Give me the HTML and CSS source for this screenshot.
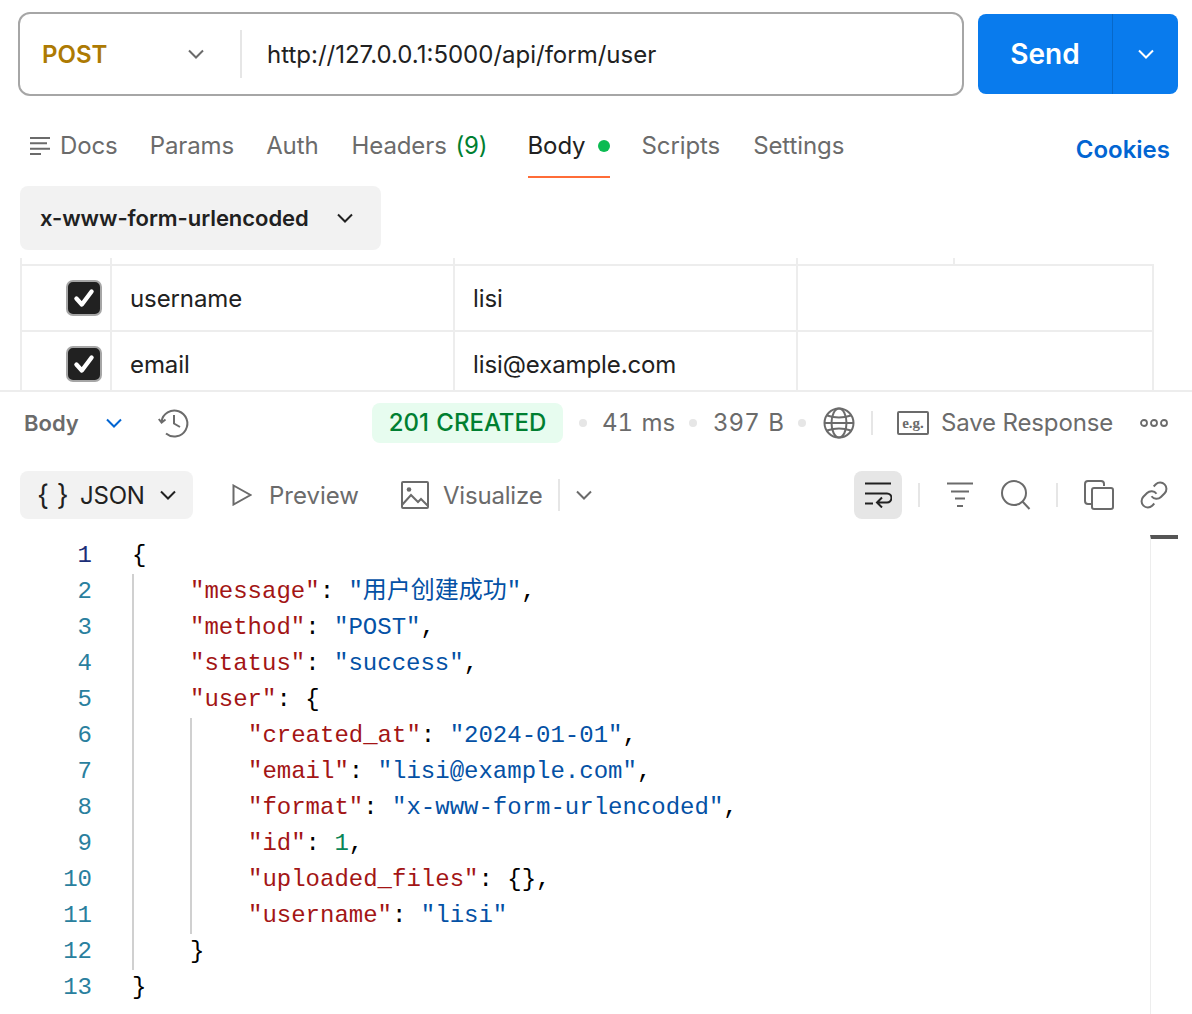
FILE: index.html
```html
<!DOCTYPE html>
<html lang="en">
<head>
    <meta charset="UTF-8">
    <meta name="viewport" content="width=device-width, initial-scale=1.0">
    <title>POST form user</title>
    <link rel="stylesheet" href="styles.css">
</head>
<body>
    <div class="page">
        <!-- Request -->
        <section class="request">
            <div class="url-row">
                <div class="url-box">
                    <div class="method">
                        <span class="method-name">POST</span>
                        <svg class="icon-chevron" viewBox="0 0 16 16"><path d="M1 4.500 8 11.500 15 4.500"/></svg>
                    </div>
                    <span class="url-text">http://127.0.0.1:5000/api/form/user</span>
                </div>
                <div class="send">
                    <span class="send-label">Send</span>
                    <span class="send-more"><svg class="icon-chevron" viewBox="0 0 16 16"><path d="M1 4.500 8 11.500 15 4.500"/></svg></span>
                </div>
            </div>

            <nav class="tabs">
                <svg class="icon-docs" viewBox="0 0 20 20"><path d="M0 1h20M0 6.300h17M0 11.700h20M0 17h11"/></svg>
                <a class="tab tab-tight">Docs</a>
                <a class="tab tab-tight">Params</a>
                <a class="tab">Auth</a>
                <a class="tab tab-headers">Headers <span class="tab-count">(9)</span></a>
                <a class="tab tab-active">Body<i class="tab-dot"></i></a>
                <a class="tab">Scripts</a>
                <a class="tab">Settings</a>
                <a class="cookies">Cookies</a>
            </nav>

            <div class="body-type">
                <span>x-www-form-urlencoded</span>
                <svg class="icon-chevron" viewBox="0 0 16 16"><path d="M1 4.500 8 11.500 15 4.500"/></svg>
            </div>

            <div class="params">
                <div class="params-head">
                    <span></span><span></span><span></span><span></span><span></span>
                </div>
                <div class="params-row">
                    <div class="cell cell-check"><span class="check"><svg viewBox="0 0 24 24"><path d="M5 12.500 10 18 19 6"/></svg></span></div>
                    <div class="cell">username</div>
                    <div class="cell">lisi</div>
                    <div class="cell"></div>
                </div>
                <div class="params-row">
                    <div class="cell cell-check"><span class="check"><svg viewBox="0 0 24 24"><path d="M5 12.500 10 18 19 6"/></svg></span></div>
                    <div class="cell">email</div>
                    <div class="cell">lisi@example.com</div>
                    <div class="cell"></div>
                </div>
            </div>
        </section>

        <!-- Response -->
        <section class="response">
            <div class="status-bar">
                <span class="res-body">Body</span>
                <svg class="icon-chevron icon-blue" viewBox="0 0 16 16"><path d="M1 4.500 8 11.500 15 4.500"/></svg>
                <svg class="icon-history" viewBox="0 0 32 32"><path d="M3.500 14.500A13 13 0 1 1 8 26.500M.8 12 3.600 15.500 7.500 12.500M16 8v8.500l6 3.500"/></svg>
                <span class="status-badge">201 CREATED</span>
                <i class="dot dot-first"></i>
                <span class="metric metric-time">41 ms</span>
                <i class="dot"></i>
                <span class="metric metric-size">397 B</span>
                <i class="dot"></i>
                <svg class="icon-globe" viewBox="0 0 32 32"><circle cx="16" cy="16" r="14.500"/><ellipse cx="16" cy="16" rx="7.500" ry="14.500"/><path d="M4 8.500q12 4 24 0M4 23.500q12-4 24 0M1.500 16h29"/></svg>
                <i class="bar"></i>
                <span class="eg-icon">e.g.</span>
                <span class="save">Save Response</span>
                <svg class="icon-more" viewBox="0 0 28 10"><circle cx="4" cy="5" r="3"/><circle cx="14" cy="5" r="3"/><circle cx="24" cy="5" r="3"/></svg>
            </div>

            <div class="view-bar">
                <div class="format">
                    <span class="format-braces">{ }</span>
                    <span class="format-name">JSON</span>
                    <svg class="icon-chevron" viewBox="0 0 16 16"><path d="M1 4.500 8 11.500 15 4.500"/></svg>
                </div>
                <svg class="icon-play" viewBox="0 0 20 22"><path d="M1.500 1.500 18.500 11 1.500 20.500Z"/></svg>
                <span class="view-link view-preview">Preview</span>
                <svg class="icon-image" viewBox="0 0 28 28"><rect x="1" y="1" width="26" height="26" rx="1"/><circle cx="8" cy="8.500" r="2.300" class="fill"/><path d="M1 24 10 14l7 7 3-3 7 7"/></svg>
                <span class="view-link view-visualize">Visualize</span>
                <i class="bar bar-view"></i>
                <svg class="icon-chevron icon-grey" viewBox="0 0 16 16"><path d="M1 4.500 8 11.500 15 4.500"/></svg>

                <div class="view-tools">
                    <span class="wrap-btn">
                        <svg viewBox="0 0 28 26"><path d="M1 1.500h26M1 11.500h22a4.500 4.500 0 0 1 0 9H14M18 15.500l-5 5 5 5M1 21.500h8"/></svg>
                    </span>
                    <i class="bar"></i>
                    <svg class="icon-filter" viewBox="0 0 28 26"><path d="M1 1.500h26M5 9.500h18M9 16.500h10M11 24h6"/></svg>
                    <svg class="icon-search" viewBox="0 0 30 30"><circle cx="13" cy="13" r="12"/><path d="M21.500 21.500 28.500 29"/></svg>
                    <i class="bar bar-search"></i>
                    <svg class="icon-copy" viewBox="0 0 30 30"><path d="M7 24H4a3 3 0 0 1-3-3V4a3 3 0 0 1 3-3h13a3 3 0 0 1 3 3v2"/><rect x="8" y="8" width="21" height="21" rx="2"/></svg>
                    <svg class="icon-link" viewBox="0 0 24 24"><path d="M10 13a5 5 0 0 0 7.540.540l3-3a5 5 0 0 0-7.070-7.070l-1.720 1.710"/><path d="M14 11a5 5 0 0 0-7.540-.540l-3 3a5 5 0 0 0 7.070 7.070l1.710-1.710"/></svg>
                </div>
            </div>

            <div class="editor">
                <ol class="gutter">
                    <li class="gutter-active">1</li><li>2</li><li>3</li><li>4</li><li>5</li><li>6</li><li>7</li><li>8</li><li>9</li><li>10</li><li>11</li><li>12</li><li>13</li>
                </ol>
                <div class="code">
                    <div class="line">{</div>
                    <div class="fold">
                        <div class="line"><span class="key">"message"</span>: <span class="str">"用户创建成功"</span>,</div>
                        <div class="line"><span class="key">"method"</span>: <span class="str">"POST"</span>,</div>
                        <div class="line"><span class="key">"status"</span>: <span class="str">"success"</span>,</div>
                        <div class="line"><span class="key">"user"</span>: {</div>
                        <div class="fold">
                            <div class="line"><span class="key">"created_at"</span>: <span class="str">"2024-01-01"</span>,</div>
                            <div class="line"><span class="key">"email"</span>: <span class="str">"lisi@example.com"</span>,</div>
                            <div class="line"><span class="key">"format"</span>: <span class="str">"x-www-form-urlencoded"</span>,</div>
                            <div class="line"><span class="key">"id"</span>: <span class="num">1</span>,</div>
                            <div class="line"><span class="key">"uploaded_files"</span>: {},</div>
                            <div class="line"><span class="key">"username"</span>: <span class="str">"lisi"</span></div>
                        </div>
                        <div class="line">}</div>
                    </div>
                    <div class="line">}</div>
                </div>
                <div class="minimap"></div>
            </div>
        </section>
    </div>
</body>
</html>
```
FILE: styles.css
```css
* {
    margin: 0;
    padding: 0;
    box-sizing: border-box;
}

body {
    background-color: #fff;
    font-family: Inter, "Noto Sans", sans-serif;
    color: #212121;
}

svg {
    display: block;
    fill: none;
    stroke: #6b6b6b;
    stroke-width: 2;
    flex-shrink: 0;
}

i {
    display: block;
}

.page {
    width: 1192px;
    height: 1014px;
    overflow: hidden;
}

.icon-chevron {
    width: 16px;
    height: 16px;
}

/* Request */
.request {
    height: 390px;
    overflow: hidden;
    padding-top: 12px;
}

.url-row {
    display: flex;
    align-items: center;
    padding: 0 14px 0 18px;
}

.url-box {
    display: flex;
    align-items: center;
    width: 946px;
    height: 84px;
    border: 2px solid #a6a6a6;
    border-radius: 12px;
}

.method {
    display: flex;
    align-items: center;
    justify-content: space-between;
    width: 222px;
    height: 48px;
    padding: 0 36px 0 22px;
    border-right: 2px solid #e6e6e6;
}

.method-name {
    font-size: 24px;
    font-weight: 600;
    color: #ad7a03;
}

.url-text {
    margin-left: 25px;
    font-size: 24px;
    color: #212121;
}

.send {
    display: flex;
    align-items: center;
    width: 200px;
    height: 80px;
    margin-left: 14px;
    border-radius: 8px;
    background-color: #097bed;
    color: #fff;
}

.send-label {
    width: 135px;
    height: 100%;
    display: flex;
    align-items: center;
    justify-content: center;
    font-size: 28px;
    font-weight: 600;
    border-right: 1px solid #0768c9;
}

.send-more {
    flex: 1;
    display: flex;
    justify-content: center;
}

.send-more svg {
    stroke: #fff;
}

.tabs {
    display: flex;
    align-items: flex-start;
    height: 90px;
    padding: 36px 22px 0 30px;
}

.tab {
    font-size: 24px;
    line-height: 28px;
    letter-spacing: -0.1px;
    color: #6b6b6b;
    margin-right: 33px;
    display: flex;
    align-items: center;
    white-space: pre;
}

.tab-tight {
    margin-right: 32px;
}

.icon-docs {
    width: 20px;
    height: 20px;
    margin: 5px 10px 0 0;
}

.tab-headers {
    word-spacing: 2px;
    margin-right: 40px;
}

.tab-count {
    color: #007f31;
}

.tab-active {
    color: #212121;
    height: 46px;
    align-items: flex-start;
    border-bottom: 2px solid #ff6c37;
    margin-right: 32px;
}

.tab-dot {
    width: 12px;
    height: 12px;
    margin: 8px 0 0 12px;
    border-radius: 50%;
    background-color: #0cbb52;
}

.cookies {
    margin-left: auto;
    margin-top: 4px;
    font-size: 24px;
    line-height: 28px;
    font-weight: 600;
    color: #0265d2;
}

.body-type {
    display: flex;
    align-items: center;
    justify-content: space-between;
    width: 361px;
    height: 64px;
    margin-left: 20px;
    padding: 0 28px 0 20px;
    border-radius: 8px;
    background-color: #f2f2f2;
    font-size: 22px;
    font-weight: 600;
    letter-spacing: -0.05px;
}

.body-type svg {
    stroke: #212121;
}

.params {
    margin: 8px 0 0 20px;
    width: 1134px;
}

.params-head {
    display: grid;
    grid-template-columns: 90px 343px 343px 157px 201px;
    height: 6px;
}

.params-head span {
    border-left: 2px solid #ededed;
}

.params-row {
    display: grid;
    grid-template-columns: 90px 343px 343px 356px;
    height: 66px;
    border-top: 2px solid #ededed;
    border-right: 2px solid #ededed;
}

.cell {
    display: flex;
    align-items: center;
    padding-left: 18px;
    border-left: 2px solid #ededed;
    font-size: 24px;
    letter-spacing: -0.1px;
}

.cell-check {
    padding-left: 44px;
}

.check {
    display: flex;
    align-items: center;
    justify-content: center;
    width: 36px;
    height: 36px;
    border: 2px solid #a6a6a6;
    border-radius: 7px;
    background-color: #212121;
}

.check svg {
    width: 26px;
    height: 26px;
    stroke: #fff;
    stroke-width: 4;
    stroke-linecap: round;
    stroke-linejoin: round;
}

/* Response */
.response {
    height: 624px;
    border-top: 2px solid #ededed;
}

.status-bar {
    display: flex;
    align-items: center;
    height: 62px;
    padding-left: 24px;
    font-size: 24px;
    color: #6b6b6b;
}

.res-body {
    font-size: 22px;
    font-weight: 600;
    width: 82px;
}

.icon-blue {
    stroke: #0265d2;
}

.icon-history {
    width: 32px;
    height: 32px;
    margin: 0 182px 0 36px;
}

.status-badge {
    display: flex;
    align-items: center;
    justify-content: center;
    width: 191px;
    height: 40px;
    padding-bottom: 2px;
    border-radius: 8px;
    background-color: #e7fcef;
    color: #007f31;
    font-weight: 500;
    word-spacing: 1px;
}

.dot {
    width: 8px;
    height: 8px;
    border-radius: 50%;
    background-color: #e6e6e6;
    margin: 0 16px;
}

.dot-first {
    margin-right: 15px;
}

.metric {
    padding-bottom: 2px;
    word-spacing: 2px;
    white-space: nowrap;
    font-variant-numeric: tabular-nums;
}

.metric-time {
    width: 71px;
}

.metric-size {
    width: 69px;
}

.icon-globe {
    width: 32px;
    height: 32px;
    margin-left: 1px;
}

.bar {
    width: 2px;
    height: 24px;
    background-color: #e6e6e6;
}

.status-bar .bar {
    margin: 0 24px 0 16px;
}

.eg-icon {
    width: 32px;
    height: 24px;
    border: 2px solid #6b6b6b;
    border-radius: 2px;
    font-family: "Liberation Serif", serif;
    font-size: 15px;
    font-weight: 700;
    line-height: 20px;
    text-align: center;
}

.save {
    margin-left: 12px;
    width: 199px;
    padding-bottom: 2px;
    letter-spacing: -0.15px;
}

.icon-more {
    width: 28px;
    height: 10px;
    stroke-width: 1.800;
}

.view-bar {
    display: flex;
    align-items: center;
    height: 48px;
    margin-top: 17px;
    padding-left: 20px;
    font-size: 24px;
}

.format {
    display: flex;
    align-items: center;
    width: 173px;
    height: 48px;
    padding-left: 17px;
    border-radius: 8px;
    background-color: #f2f2f2;
}

.format-braces {
    width: 43px;
    font-size: 28px;
    white-space: pre;
}

.format-name {
    letter-spacing: -0.2px;
}

.format svg {
    margin-left: 15px;
    stroke: #212121;
}

.icon-play {
    width: 20px;
    height: 22px;
    margin-left: 39px;
}

.view-link {
    color: #6b6b6b;
}

.view-preview {
    margin-left: 17px;
    width: 132px;
}

.icon-image {
    width: 28px;
    height: 28px;
}

.icon-image .fill {
    fill: #6b6b6b;
    stroke: none;
}

.view-visualize {
    margin-left: 14px;
    width: 115px;
    letter-spacing: -0.2px;
}

.bar-view {
    height: 32px;
}

.icon-grey {
    margin-left: 16px;
}

.view-tools {
    display: flex;
    align-items: center;
    margin-left: 262px;
}

.wrap-btn {
    display: flex;
    align-items: center;
    justify-content: center;
    width: 48px;
    height: 48px;
    border-radius: 8px;
    background-color: #e6e6e6;
}

.wrap-btn svg {
    width: 28px;
    height: 26px;
    stroke: #212121;
}

.view-tools .bar {
    margin: 0 26px 0 16px;
}

.view-tools .bar-search {
    margin: 0 26px 0 25px;
}

.icon-filter {
    width: 28px;
    height: 26px;
}

.icon-search {
    width: 30px;
    height: 30px;
    margin-left: 27px;
}

.icon-copy,
.icon-link {
    width: 30px;
    height: 30px;
}

.icon-link {
    margin-left: 25px;
    stroke-width: 1.600;
}

/* Editor */
.editor {
    display: flex;
    margin-top: 19px;
    position: relative;
    font-family: "Liberation Mono", "Noto Sans CJK SC", monospace;
    font-size: 24px;
    line-height: 36px;
}

.gutter {
    list-style: none;
    width: 92px;
    text-align: right;
    color: #2a7f9e;
}

.gutter-active {
    color: #1c2f78;
}

.code {
    margin-left: 40px;
    color: #000;
}

.line {
    height: 36px;
    white-space: pre;
}

.fold {
    padding-left: 56px;
    border-left: 2px solid #d0d0d0;
}

.key {
    color: #a31515;
}

.str {
    color: #0451a5;
}

.num {
    color: #098658;
}

.minimap {
    position: absolute;
    right: 14px;
    top: -3px;
    width: 28px;
    height: 480px;
    border-top: 4px solid #555;
    border-left: 1px solid #ededed;
}
```
